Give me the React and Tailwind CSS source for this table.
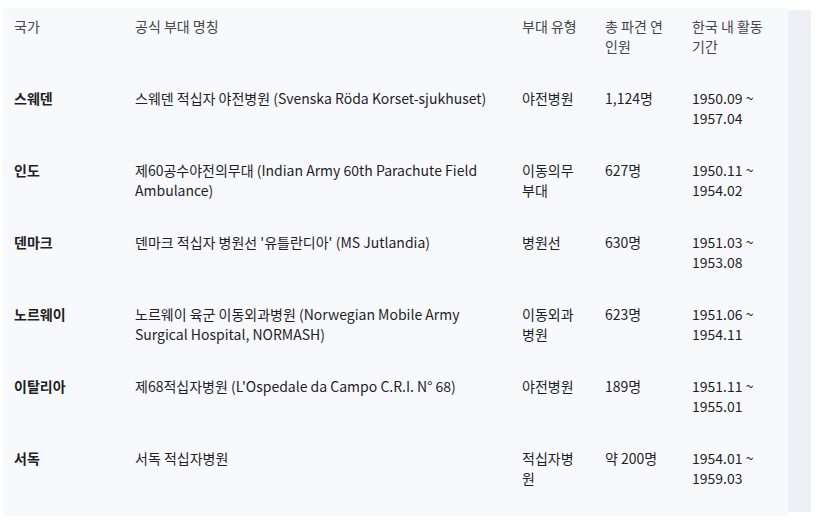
const rows = [
  { country: '스웨덴', name: '스웨덴 적십자 야전병원 (Svenska Röda Korset-sjukhuset)', type: '야전병원', count: '1,124명', period: ['1950.09 ~', '1957.04'] },
  { country: '인도', name: '제60공수야전의무대 (Indian Army 60th Parachute Field Ambulance)', type: '이동의무부대', count: '627명', period: ['1950.11 ~', '1954.02'] },
  { country: '덴마크', name: "덴마크 적십자 병원선 '유틀란디아' (MS Jutlandia)", type: '병원선', count: '630명', period: ['1951.03 ~', '1953.08'] },
  { country: '노르웨이', name: '노르웨이 육군 이동외과병원 (Norwegian Mobile Army Surgical Hospital, NORMASH)', type: '이동외과병원', count: '623명', period: ['1951.06 ~', '1954.11'] },
  { country: '이탈리아', name: "제68적십자병원 (L'Ospedale da Campo C.R.I. N° 68)", type: '야전병원', count: '189명', period: ['1951.11 ~', '1955.01'] },
  { country: '서독', name: '서독 적십자병원', type: '적십자병원', count: '약 200명', period: ['1954.01 ~', '1959.03'] },
];

export default function App() {
  return (
    <div className="w-[818px] h-[522px] bg-white pt-2 flex font-['Noto_Sans_CJK_KR','Noto_Sans',sans-serif] text-[14px] leading-5">
      <div className="ml-[3px] w-[785px] h-[508px] bg-[#f8f9fc] pt-2">
        <table className="table-fixed w-full border-collapse">
          <colgroup>
            <col className="w-[121px]" />
            <col className="w-[387px]" />
            <col className="w-[83px]" />
            <col className="w-[87px]" />
            <col />
          </colgroup>
          <thead>
            <tr className="text-[#444746] text-left align-top">
              <th className="font-normal pl-[11px] pr-3 pb-4">국가</th>
              <th className="font-normal pl-[11px] pr-3 pb-4">공식 부대 명칭</th>
              <th className="font-normal pl-[11px] pr-3 pb-4">부대 유형</th>
              <th className="font-normal pl-[11px] pr-3 pb-4">총 파견 연인원</th>
              <th className="font-normal pl-[11px] pr-3 pb-4">한국 내 활동 기간</th>
            </tr>
          </thead>
          <tbody className="text-[#1f1f1f]">
            {rows.map((r) => (
              <tr key={r.country} className="align-top">
                <td className="pl-[11px] pr-3 py-4 font-bold">{r.country}</td>
                <td className="pl-[11px] pr-3 py-4">{r.name}</td>
                <td className="pl-[11px] pr-3 py-4 break-all">{r.type}</td>
                <td className="pl-[11px] pr-3 py-4">{r.count}</td>
                <td className="pl-[11px] pr-3 py-4">
                  <div>{r.period[0]}</div>
                  <div>{r.period[1]}</div>
                </td>
              </tr>
            ))}
          </tbody>
        </table>
      </div>
      <div className="mt-[2px] w-[23px] h-[502px] bg-[#eef0f5]" />
    </div>
  );
}
